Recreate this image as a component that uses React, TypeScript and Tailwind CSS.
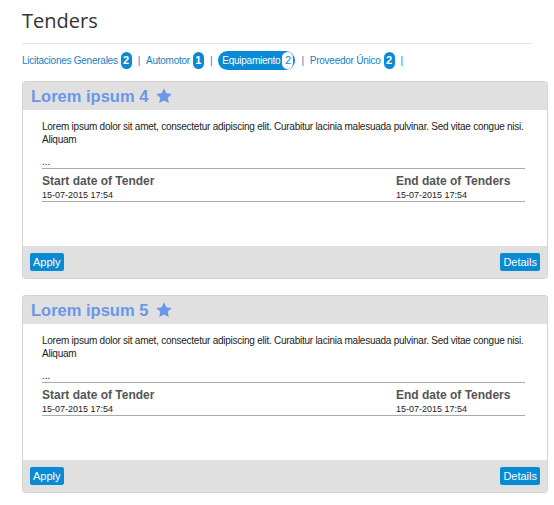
import React from "react";

const Star = () => (
  <svg width="18" height="18" viewBox="0 0 24 24" className="ml-[7px]">
    <path
      d="M12 1.8l3.1 6.6 7.2.9-5.3 5 1.4 7.1L12 17.9l-6.4 3.5 1.4-7.1-5.3-5 7.2-.9z"
      fill="#6b97e8"
    />
  </svg>
);

const tabs = [
  { name: "Licitaciones Generales", count: 2, active: false },
  { name: "Automotor", count: 1, active: false },
  { name: "Equipamiento", count: 2, active: true },
  { name: "Proveedor Único", count: 2, active: false },
];

function Card({ title }: { title: string }) {
  return (
    <div className="w-[526px] rounded-[3px] border border-[#d4d4d4] overflow-hidden">
      <div className="h-[28px] bg-[#e0e0e0] flex items-center pl-[8px]">
        <span className="text-[16.5px] font-bold text-[#6b97e8] leading-none">{title}</span>
        <Star />
      </div>
      <div className="bg-white h-[136px] pl-[19px] pr-[22px] pt-[10px] text-[10px] leading-[13px] text-[#222]">
        <p className="tracking-[-0.25px]">
          Lorem ipsum dolor sit amet, consectetur adipiscing elit. Curabitur lacinia malesuada pulvinar. Sed vitae congue nisi. Aliquam
        </p>
        <div className="mt-[9px] border-b border-[#aaa]">...</div>
        <div className="flex justify-between border-b border-[#aaa] pt-[5px]">
          <div>
            <div className="text-[12px] font-bold text-[#555] leading-[14px]">Start date of Tender</div>
            <div className="text-[9px] leading-[12px] mt-[1px]">15-07-2015 17:54</div>
          </div>
          <div className="w-[129px]">
            <div className="text-[12px] font-bold text-[#555] leading-[14px]">End date of Tenders</div>
            <div className="text-[9px] leading-[12px] mt-[1px]">15-07-2015 17:54</div>
          </div>
        </div>
      </div>
      <div className="h-[32px] bg-[#e0e0e0] flex justify-between items-start pt-[7px] px-[7px]">
        <button className="h-[18px] px-[3px] bg-[#0a8ad2] text-white text-[11px] rounded-[2px] leading-[18px]">Apply</button>
        <button className="h-[18px] px-[3px] bg-[#0a8ad2] text-white text-[11px] rounded-[2px] leading-[18px]">Details</button>
      </div>
    </div>
  );
}

export default function App() {
  return (
    <div className="w-[554px] h-[505px] bg-white pl-[22px] pt-[8px]" style={{ fontFamily: '"Liberation Sans", Arial, sans-serif' }}>
      <h1 className="text-[20px] leading-[26px] text-[#333] w-[510px] pb-[9px] border-b border-[#e6e6e6]" style={{ fontFamily: '"Open Sans", sans-serif' }}>
        Tenders
      </h1>
      <div className="flex items-center h-[19px] mt-[7px] text-[10px] tracking-[-0.25px] text-[#1a7ec4]">
        {tabs.map((t) => (
          <React.Fragment key={t.name}>
            {t.active ? (
              <span className="flex items-center h-[19px] pl-[4px] pr-[2px] rounded-full bg-[#0a8ad2] text-white">
                {t.name}
                <span className="ml-[2px] w-[11px] h-[17px] rounded-full bg-white text-[#0a8ad2] text-[11px] tracking-normal flex items-center justify-center">{t.count}</span>
              </span>
            ) : (
              <span className="flex items-center">
                {t.name}
                <span className="ml-[3px] w-[11px] h-[17px] rounded-full bg-[#0a8ad2] text-white font-bold text-[11px] tracking-normal flex items-center justify-center">{t.count}</span>
              </span>
            )}
            <span className="mx-[6px] text-[#1a7ec4]">|</span>
          </React.Fragment>
        ))}
      </div>
      <div className="mt-[11px] flex flex-col gap-[16px]">
        <Card title="Lorem ipsum 4" />
        <Card title="Lorem ipsum 5" />
      </div>
    </div>
  );
}
